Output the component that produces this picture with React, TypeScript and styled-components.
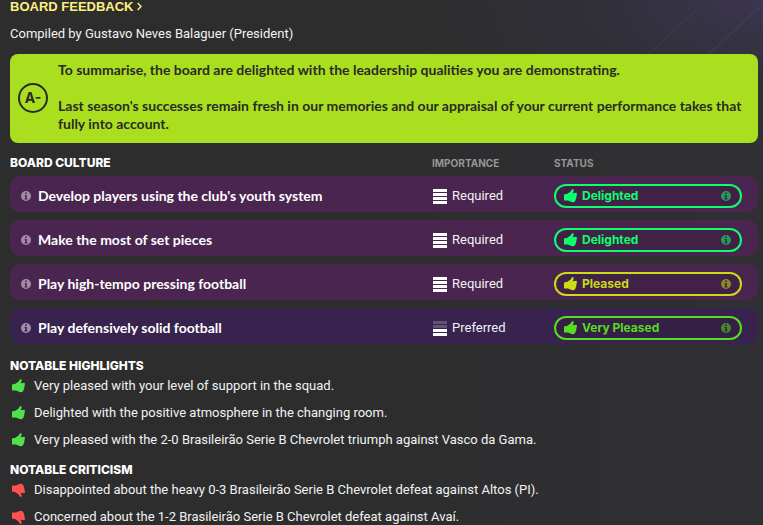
import React from "react";
import styled, { createGlobalStyle } from "styled-components";

const GlobalStyle = createGlobalStyle`
  *, *::before, *::after { box-sizing: border-box; }
  body { margin: 0; background: #2d2d2e; }
`;

const Page = styled.main`
  min-height: 100vh;
  padding: 0 5px 0 10px;
  color: #f2f2f2;
  font: 400 13px/18px Roboto, "Liberation Sans", sans-serif;
  background:
    linear-gradient(137deg, transparent 49%, rgba(96, 84, 150, 0.18) 50%, transparent 51%) right top / 110px 110px no-repeat,
    linear-gradient(137deg, transparent 49%, rgba(96, 84, 150, 0.14) 50%, transparent 51%) right 60px top / 110px 110px no-repeat,
    radial-gradient(ellipse 330px 150px at 100% 0, #3b3550, rgba(50, 47, 60, 0.5) 55%, transparent),
    linear-gradient(90deg, #2d2d2e 50%, #303034);
`;

const TitleLink = styled.a`
  display: inline-flex;
  align-items: center;
  gap: 3px;
  color: #fff07c;
  font: 700 13px/14px "Liberation Sans", Arial, sans-serif;
  text-decoration: none;
`;

const PageTitle = styled.h1`
  display: flex;
  margin: 0;
`;

const Byline = styled.p`
  margin: 11px 0;
`;

const Summary = styled.section`
  display: flex;
  align-items: center;
  gap: 10px;
  padding: 7px 8px 10px;
  border-radius: 8px;
  background: #a9df1e;
  color: #2b2a27;
  font: 700 14px/18px Lato, "Liberation Sans", sans-serif;
`;

const Grade = styled.div`
  display: flex;
  flex: none;
  align-items: center;
  justify-content: center;
  width: 30px;
  height: 30px;
  margin-top: 2px;
  border: 2px solid #2b2a27;
  border-radius: 50%;
  font: 700 14px/18px Inter, "Liberation Sans", sans-serif;
`;

const SummaryText = styled.div`
  display: grid;
  flex: 1;
  gap: 18px;

  p { margin: 0; }
`;

const CultureTable = styled.table`
  width: 100%;
  margin-top: 7px;
  border-collapse: separate;
  border-spacing: 0 8px;
  table-layout: fixed;
`;

const HeadCell = styled.th<{ $width?: string; $main?: boolean }>`
  width: ${(p) => p.$width ?? "auto"};
  padding: 0;
  text-align: left;
  color: ${(p) => (p.$main ? "#fff" : "#969696")};
  font: ${(p) => (p.$main ? "800 12px/10px" : "700 10px/10px")} Inter, "Liberation Sans", sans-serif;
`;

const CultureRow = styled.tr<{ $required: boolean }>`
  --row: ${(p) => (p.$required ? "#4a254f" : "#38224e")};
`;

const Cell = styled.td`
  height: 36px;
  padding: 0;
  background: var(--row);

  &:first-child { border-radius: 10px 0 0 10px; }
  &:last-child { border-radius: 0 10px 10px 0; }
`;

const Objective = styled.div`
  display: flex;
  align-items: center;
  gap: 7px;
  padding: 3px 0 0 11px;
  color: #fff;
  font: 700 14px/18px Lato, "Liberation Sans", sans-serif;

  svg { color: #a38ba7; }
`;

const Importance = styled.div`
  display: flex;
  align-items: center;
  gap: 5px;
  padding-top: 3px;
`;

const LevelIcon = styled.svg`
  flex: none;
  width: 15px;
  height: 15px;
  margin-top: 2px;
`;

const Pill = styled.div<{ $color: string }>`
  display: flex;
  align-items: center;
  gap: 5px;
  height: 24px;
  margin: 4px 16px 0 0;
  padding: 0 9px 0 8px;
  border: 2px solid ${(p) => p.$color};
  border-radius: 12px;
  background: rgba(45, 30, 50, 0.3);
  color: ${(p) => p.$color};
  font: 700 12px/18px Inter, "Liberation Sans", sans-serif;
`;

const PillLabel = styled.span`
  flex: 1;
`;

const InfoSvg = styled.svg<{ $dim?: boolean }>`
  flex: none;
  width: 10px;
  height: 10px;
  opacity: ${(p) => (p.$dim ? 0.55 : 1)};
`;

const ThumbSvg = styled.svg<{ $down?: boolean }>`
  flex: none;
  width: 13px;
  height: 14px;
  transform: ${(p) => (p.$down ? "scaleY(-1)" : "none")};
`;

const Notes = styled.section`
  margin-top: 6px;
`;

const NotesTitle = styled.h2`
  margin: 0;
  color: #fff;
  font: 800 12px/16px Inter, "Liberation Sans", sans-serif;
`;

const NoteList = styled.ul<{ $color: string }>`
  display: grid;
  gap: 9px;
  margin: 0;
  padding: 3px 0 7px;
  list-style: none;

  svg { color: ${(p) => p.$color}; }

  ${Notes}:last-child & { padding-bottom: 0; }
`;

const Note = styled.li`
  display: flex;
  align-items: center;
  gap: 9px;
  padding-left: 2px;
`;

const InfoIcon = ({ dim }: { dim?: boolean }) => (
  <InfoSvg $dim={dim} viewBox="0 0 10 10" aria-hidden="true">
    <path
      fill="currentColor"
      fillRule="evenodd"
      d="M5 0a5 5 0 1 1 0 10A5 5 0 0 1 5 0ZM4.2 1.5v1.4h1.6V1.5ZM3.5 3.9v.9h.7v2.7h-.7v.9h3v-.9h-.7V3.9Z"
    />
  </InfoSvg>
);

const ThumbIcon = ({ down }: { down?: boolean }) => (
  <ThumbSvg $down={down} viewBox="0 0 13 14" aria-hidden="true">
    <path
      fill="currentColor"
      d="M0 5.4 3.4 4.8 6.6 2.6 7.8.4 8.8 0 9.7.8 9.5 2.4 8.6 4.3 12.2 3.8 13 4.6 12.7 6.2 12.4 7.8 12.1 9.6 11.5 11.2 10.8 12.6 9.6 13.2 7.4 13 4 11.6 0 11.4Z"
    />
  </ThumbSvg>
);

const LevelBars = ({ level }: { level: number }) => (
  <LevelIcon viewBox="0 0 15 15" aria-hidden="true">
    {[0, 1, 2, 3].map((i) => (
      <rect key={i} x="1" y={i * 4} width="14" height="3" fill="#fff" opacity={4 - i <= level ? 1 : 0.22} />
    ))}
  </LevelIcon>
);

const objectives = [
  { name: "Develop players using the club's youth system", importance: "Required", status: "Delighted", color: "#0cff6d" },
  { name: "Make the most of set pieces", importance: "Required", status: "Delighted", color: "#0cff6d" },
  { name: "Play high-tempo pressing football", importance: "Required", status: "Pleased", color: "#c9dc14" },
  { name: "Play defensively solid football", importance: "Preferred", status: "Very Pleased", color: "#56dc20" },
];

const highlights = [
  "Very pleased with your level of support in the squad.",
  "Delighted with the positive atmosphere in the changing room.",
  "Very pleased with the 2-0 Brasileirão Serie B Chevrolet triumph against Vasco da Gama.",
];

const criticism = [
  "Disappointed about the heavy 0-3 Brasileirão Serie B Chevrolet defeat against Altos (PI).",
  "Concerned about the 1-2 Brasileirão Serie B Chevrolet defeat against Avaí.",
];

const NoteSection = ({ title, notes, down }: { title: string; notes: string[]; down?: boolean }) => (
  <Notes>
    <NotesTitle>{title}</NotesTitle>
    <NoteList $color={down ? "#ff514f" : "#50e24c"}>
      {notes.map((note) => (
        <Note key={note}>
          <ThumbIcon down={down} />
          {note}
        </Note>
      ))}
    </NoteList>
  </Notes>
);

export default function App() {
  return (
    <>
      <GlobalStyle />
      <Page>
        <PageTitle>
          <TitleLink href="#feedback">
            BOARD FEEDBACK
            <svg width="5" height="10" viewBox="0 0 5 10" aria-hidden="true">
              <path d="M.7 1 4 4.5.7 8" fill="none" stroke="currentColor" strokeWidth="1.5" />
            </svg>
          </TitleLink>
        </PageTitle>
        <Byline>Compiled by Gustavo Neves Balaguer (President)</Byline>

        <Summary>
          <Grade>A-</Grade>
          <SummaryText>
            <p>To summarise, the board are delighted with the leadership qualities you are demonstrating.</p>
            <p>
              Last season's successes remain fresh in our memories and our appraisal of your current performance takes
              that fully into account.
            </p>
          </SummaryText>
        </Summary>

        <CultureTable>
          <thead>
            <tr>
              <HeadCell scope="col" $main>BOARD CULTURE</HeadCell>
              <HeadCell scope="col" $width="122px">IMPORTANCE</HeadCell>
              <HeadCell scope="col" $width="204px">STATUS</HeadCell>
            </tr>
          </thead>
          <tbody>
            {objectives.map((o) => (
              <CultureRow key={o.name} $required={o.importance === "Required"}>
                <Cell>
                  <Objective>
                    <InfoIcon />
                    {o.name}
                  </Objective>
                </Cell>
                <Cell>
                  <Importance>
                    <LevelBars level={o.importance === "Required" ? 4 : 2} />
                    {o.importance}
                  </Importance>
                </Cell>
                <Cell>
                  <Pill $color={o.color}>
                    <ThumbIcon />
                    <PillLabel>{o.status}</PillLabel>
                    <InfoIcon dim />
                  </Pill>
                </Cell>
              </CultureRow>
            ))}
          </tbody>
        </CultureTable>

        <NoteSection title="NOTABLE HIGHLIGHTS" notes={highlights} />
        <NoteSection title="NOTABLE CRITICISM" notes={criticism} down />
      </Page>
    </>
  );
}
